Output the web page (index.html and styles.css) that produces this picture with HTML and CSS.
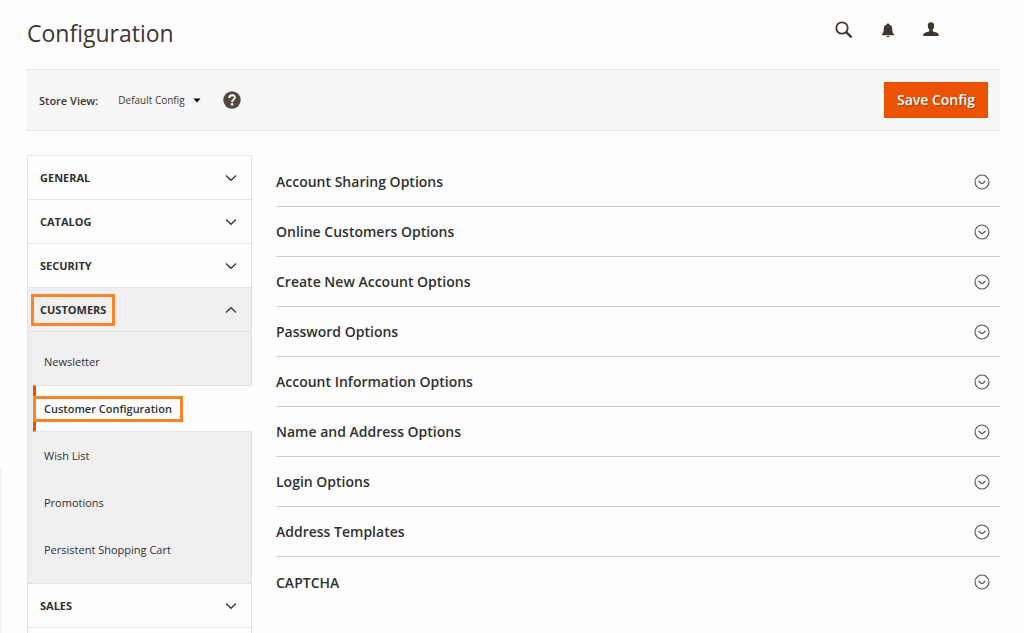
FILE: index.html
```
<!DOCTYPE html>
<html lang="en">
<head>
  <meta charset="UTF-8">
  <meta name="viewport" content="width=device-width, initial-scale=1.0">
  <title>Configuration</title>
  <link rel="stylesheet" href="styles.css">
</head>
<body>
  <!-- shared icon shapes -->
  <svg class="icon-defs" aria-hidden="true">
    <symbol id="chevron" viewBox="0 0 12 8">
      <path d="M1 1.5 L6 6.3 L11 1.5" fill="none" stroke="#41362f" stroke-width="1.3"/>
    </symbol>
    <symbol id="expand" viewBox="0 0 16 16">
      <circle cx="8" cy="8" r="7" fill="none" stroke="#5c544f" stroke-width="1.1"/>
      <path d="M4.5 7 L7.2 9.3 Q8 9.9 8.8 9.3 L11.5 7" fill="none" stroke="#5c544f" stroke-width="1.2"/>
    </symbol>
  </svg>

  <div class="page">
    <header class="page-header">
      <h1 class="page-title">Configuration</h1>
      <div class="header-actions">
        <button class="icon-button" type="button" aria-label="Search">
          <svg width="18" height="18" viewBox="0 0 18 18">
            <circle cx="7" cy="7" r="5.7" fill="none" stroke="#41362f" stroke-width="1.8"/>
            <path d="M11.2 11.2 L16.6 16.3" stroke="#41362f" stroke-width="2.4"/>
          </svg>
        </button>
        <button class="icon-button" type="button" aria-label="Notifications">
          <svg width="14" height="16" viewBox="0 0 14 16">
            <path d="M7 1.6 C7.8 1.6 8.2 2 8.3 2.6 C10.7 3.3 11.2 5.4 11.3 7.4 C11.4 9.8 11.8 11 13.2 12.4 V13.2 H0.8 V12.4 C2.2 11 2.6 9.8 2.7 7.4 C2.8 5.4 3.3 3.3 5.7 2.6 C5.8 2 6.2 1.6 7 1.6 Z M5.6 14 H8.4 C8.3 14.8 7.8 15.3 7 15.3 C6.2 15.3 5.7 14.8 5.6 14 Z" fill="#41362f"/>
          </svg>
        </button>
        <button class="icon-button" type="button" aria-label="Account">
          <svg width="16" height="16" viewBox="0 0 16 16">
            <path d="M8 0.2 C10.3 0.2 11.3 1.6 11.2 3.8 C11.1 5.8 10.4 6.9 9.7 7.7 V9.2 C11.5 10 14 10.2 15 11.2 C15.6 11.9 15.8 12.8 15.8 14 H0.2 C0.2 12.8 0.4 11.9 1 11.2 C2 10.2 4.5 10 6.3 9.2 V7.7 C5.6 6.9 4.9 5.8 4.8 3.8 C4.7 1.6 5.7 0.2 8 0.2 Z" fill="#41362f"/>
          </svg>
        </button>
      </div>
    </header>

    <div class="toolbar">
      <label class="toolbar-label" for="storeView">Store View:</label>
      <div class="store-select">
        <select id="storeView">
          <option>Default Config</option>
        </select>
        <svg class="caret" width="8" height="5" viewBox="0 0 8 5"><path d="M0.5 0.5 H7.5 L4 4.5 Z"/></svg>
      </div>
      <button class="icon-button" type="button" aria-label="Help">
        <svg width="18" height="18" viewBox="0 0 18 18">
          <circle cx="9" cy="9" r="8.7" fill="#514943"/>
          <path d="M6.2 6.9 C6.3 5.2 7.4 4.2 9.1 4.2 C10.8 4.2 11.9 5.2 11.9 6.6 C11.9 8.4 9.1 8.6 9.1 10.9" fill="none" stroke="#fff" stroke-width="1.9"/>
          <circle cx="9.1" cy="13.3" r="1.2" fill="#fff"/>
        </svg>
      </button>
      <button class="save-button" type="button">Save Config</button>
    </div>

    <div class="content">
      <nav class="config-nav">
        <button class="nav-section" type="button"><span>GENERAL</span><svg class="chevron"><use href="#chevron"/></svg></button>
        <button class="nav-section" type="button"><span>CATALOG</span><svg class="chevron"><use href="#chevron"/></svg></button>
        <button class="nav-section" type="button"><span>SECURITY</span><svg class="chevron"><use href="#chevron"/></svg></button>
        <button class="nav-section open" type="button" aria-expanded="true"><span class="highlight">CUSTOMERS</span><svg class="chevron"><use href="#chevron"/></svg></button>
        <ul class="nav-items">
          <li><a href="#newsletter">Newsletter</a></li>
          <li class="active"><a href="#customer"><span class="highlight">Customer Configuration</span></a></li>
          <li><a href="#wishlist">Wish List</a></li>
          <li><a href="#promotions">Promotions</a></li>
          <li><a href="#cart">Persistent Shopping Cart</a></li>
        </ul>
        <button class="nav-section" type="button"><span>SALES</span><svg class="chevron"><use href="#chevron"/></svg></button>
      </nav>

      <main class="options">
        <button class="option" type="button"><span>Account Sharing Options</span><svg class="expand"><use href="#expand"/></svg></button>
        <button class="option" type="button"><span>Online Customers Options</span><svg class="expand"><use href="#expand"/></svg></button>
        <button class="option" type="button"><span>Create New Account Options</span><svg class="expand"><use href="#expand"/></svg></button>
        <button class="option" type="button"><span>Password Options</span><svg class="expand"><use href="#expand"/></svg></button>
        <button class="option" type="button"><span>Account Information Options</span><svg class="expand"><use href="#expand"/></svg></button>
        <button class="option" type="button"><span>Name and Address Options</span><svg class="expand"><use href="#expand"/></svg></button>
        <button class="option" type="button"><span>Login Options</span><svg class="expand"><use href="#expand"/></svg></button>
        <button class="option" type="button"><span>Address Templates</span><svg class="expand"><use href="#expand"/></svg></button>
        <button class="option" type="button"><span>CAPTCHA</span><svg class="expand"><use href="#expand"/></svg></button>
      </main>
    </div>
  </div>
</body>
</html>
```
FILE: styles.css
```
* {
  box-sizing: border-box;
}

body {
  margin: 0;
  font-family: "Open Sans", sans-serif;
  font-size: 11px;
  color: #41362f;
  background: #fefefe;
}

/* edge of the collapsed admin menu */
body::before {
  content: "";
  position: fixed;
  left: 0;
  bottom: 0;
  width: 2px;
  height: 164px;
  background: #f3f3f3;
}

button,
select {
  font: inherit;
  color: inherit;
  background: none;
  border: none;
  padding: 0;
  cursor: pointer;
}

.icon-defs {
  display: none;
}

.page {
  display: flex;
  flex-direction: column;
  height: 100vh;
  overflow: hidden;
  padding: 0 24px 0 27px;
}

.page-header {
  display: flex;
  justify-content: space-between;
  align-items: center;
  padding: 16px 61px 19px 0;
}

.page-title {
  margin: 0;
  font-size: 23px;
  line-height: 34px;
  font-weight: 400;
}

.header-actions {
  display: flex;
  align-items: center;
  gap: 28px;
  padding-bottom: 6px;
}

.icon-button {
  display: flex;
}

.toolbar {
  display: flex;
  align-items: center;
  padding: 12px;
  background: #f7f7f7;
  border-top: 1px solid #e3e3e3;
  border-bottom: 1px solid #e3e3e3;
}

.toolbar-label {
  margin-right: 20px;
  font-weight: 600;
}

.store-select {
  display: flex;
  align-items: center;
  margin-right: 22px;
  font-size: 10px;
}

.store-select select {
  appearance: none;
  padding-right: 16px;
  margin-right: -8px;
}

.caret {
  pointer-events: none;
}

.save-button {
  margin-left: auto;
  padding: 8px 13px;
  background: #eb5202;
  color: #fff;
  font-size: 14px;
  line-height: 20px;
  font-weight: 600;
  text-shadow: 1px 1px 0 rgba(0, 0, 0, 0.25);
}

.content {
  flex: 1;
  display: flex;
  gap: 24px;
  padding-top: 24px;
}

.config-nav {
  display: flex;
  flex-direction: column;
  width: 225px;
  border: 1px solid #e3e3e3;
  border-bottom: none;
}

.nav-section {
  display: flex;
  justify-content: space-between;
  align-items: center;
  height: 44px;
  padding: 0 14px 0 12px;
  border-bottom: 1px solid #e3e3e3;
  color: #303030;
  font-weight: 700;
}

.nav-section.open {
  background: #f0f0f0;
}

.open .chevron {
  transform: rotate(180deg);
}

.chevron {
  width: 12px;
  height: 8px;
}

/* the negative margin takes back the border and padding, so the text stays in line */
.highlight {
  padding: 5px 6px;
  margin-left: -9px;
  border: 3px solid #ff8427;
  line-height: 16px;
}

.nav-items {
  list-style: none;
  margin: 0;
  padding: 6px 0 10px;
  background: #f0f0f0;
  border-bottom: 1px solid #e3e3e3;
}

.nav-items a {
  display: flex;
  align-items: center;
  height: 47px;
  padding-left: 16px;
  color: #303030;
  text-decoration: none;
}

.nav-items .active {
  margin: 0 -1px 0 5px;
  background: #fefefe;
  border-left: 3px solid #eb5202;
  border-top: 1px solid #e3e3e3;
  border-bottom: 1px solid #e3e3e3;
}

.nav-items .active a {
  height: 45px;
  padding-left: 8px;
  font-weight: 600;
}

.active .highlight {
  padding: 2px 8px;
  margin-left: -11px;
}

.options {
  flex: 1;
  padding-top: 2px;
}

.option {
  display: flex;
  justify-content: space-between;
  align-items: center;
  width: 100%;
  height: 50px;
  padding-right: 10px;
  border-bottom: 1px solid #ccc;
  color: #303030;
  font-size: 14px;
  font-weight: 600;
}

.option:last-child {
  border-bottom: none;
}

.expand {
  width: 16px;
  height: 16px;
}
```
